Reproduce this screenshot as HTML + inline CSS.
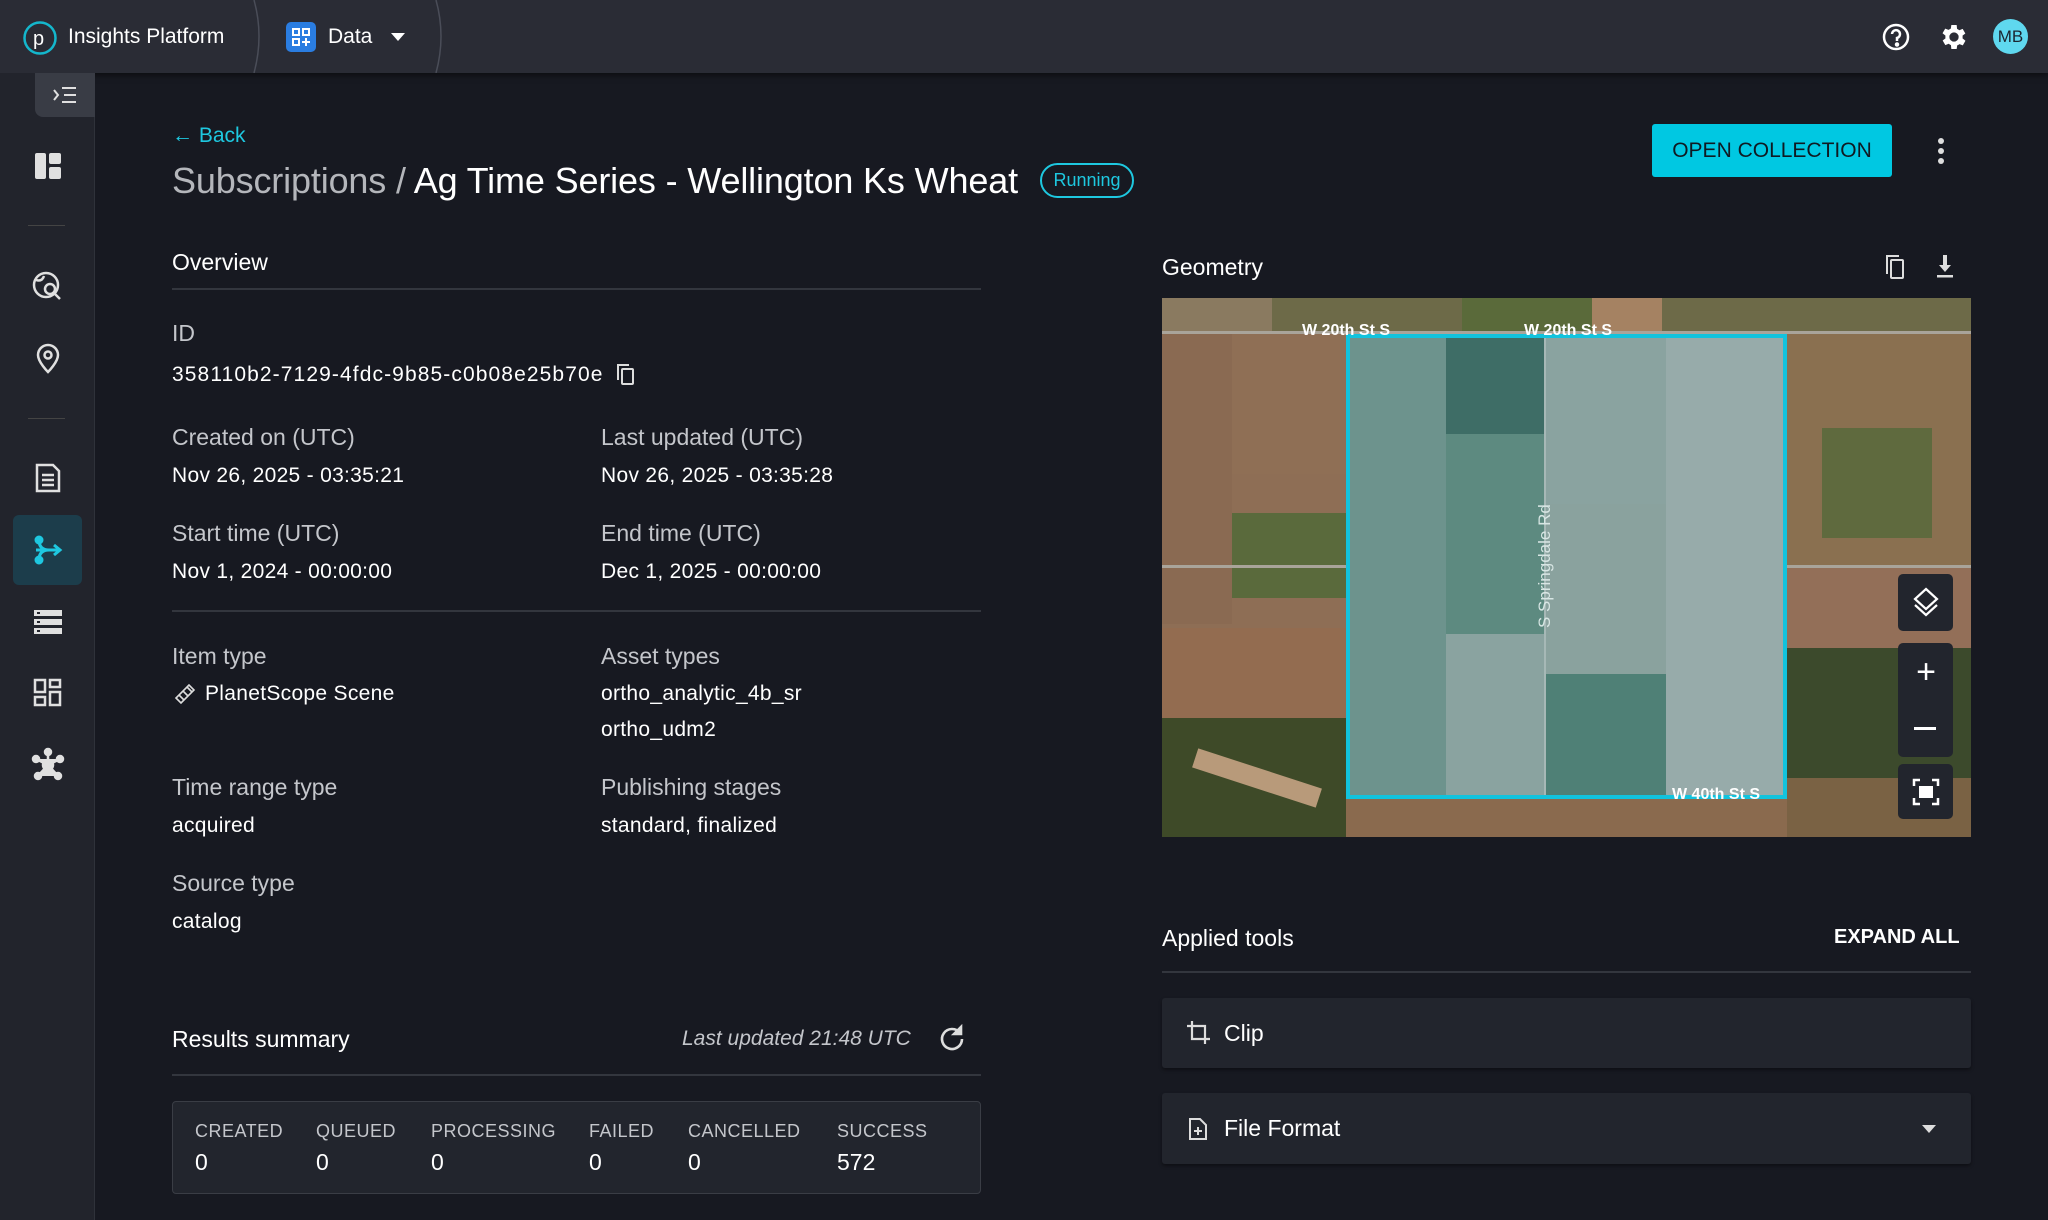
<!DOCTYPE html>
<html><head><meta charset="utf-8"><style>
*{box-sizing:border-box;margin:0;padding:0}
body{width:2048px;height:1220px;background:#171921;font-family:"Liberation Sans",sans-serif;color:#fff;position:relative;overflow:hidden}
.a{position:absolute;white-space:nowrap}
.lbl{font-size:23px;color:#c4c6cb}
.val{font-size:21px;color:#fff;letter-spacing:0.3px}
.line{position:absolute;height:2px;background:#33363e}
.sic{position:absolute;left:30px;width:36px;height:36px}
.m{position:absolute}
</style></head><body>
<!-- header -->
<div class="a" style="left:0;top:0;width:2048px;height:73px;background:#2a2c35;box-shadow:0 2px 6px #0008"></div>
<svg class="a" style="left:22px;top:20px" width="36" height="36"><circle cx="18" cy="18" r="15.5" fill="none" stroke="#14b7cc" stroke-width="2.5"/><text x="11" y="25" font-family="Liberation Sans" font-size="20" fill="#fff">p</text></svg>
<div class="a" style="left:68px;top:25px;font-size:21px">Insights Platform</div>
<svg class="a" style="left:240px;top:0" width="220" height="73"><path d="M14 0 Q24 36 14 73" stroke="#4a4d58" fill="none" stroke-width="1.5"/><path d="M196 0 Q206 36 196 73" stroke="#4a4d58" fill="none" stroke-width="1.5"/></svg>
<div class="a" style="left:286px;top:22px;width:30px;height:30px;background:#2a7de1;border-radius:5px"></div>
<svg class="a" style="left:290px;top:26px" width="22" height="22" fill="none" stroke="#fff" stroke-width="2"><rect x="3" y="3" width="6" height="6"/><rect x="13" y="3" width="6" height="6"/><rect x="3" y="13" width="6" height="6"/><path d="M16 12v8M12 16h8"/></svg>
<div class="a" style="left:328px;top:25px;font-size:21px">Data</div>
<div class="a" style="left:391px;top:33px;width:0;height:0;border-left:7px solid transparent;border-right:7px solid transparent;border-top:8px solid #fff"></div>
<svg class="a" style="left:1880px;top:21px" width="32" height="32" fill="none" stroke="#fff" stroke-width="2.5"><circle cx="16" cy="16" r="12"/><path d="M12 13a4 4 0 1 1 5 4v3"/><circle cx="17" cy="23.5" r="1" fill="#fff"/></svg>
<svg class="a" style="left:1938px;top:21px" width="32" height="32" viewBox="0 0 24 24" fill="#fff"><path d="M19.4 13a7.5 7.5 0 0 0 0-2l2.1-1.6-2-3.5-2.5 1a7 7 0 0 0-1.7-1L15 3h-4l-.4 2.7a7 7 0 0 0-1.7 1l-2.5-1-2 3.5L6.6 11a7.5 7.5 0 0 0 0 2l-2.1 1.6 2 3.5 2.5-1a7 7 0 0 0 1.7 1L11 21h4l.4-2.7a7 7 0 0 0 1.7-1l2.5 1 2-3.5zM13 15.5a3.5 3.5 0 1 1 0-7 3.5 3.5 0 0 1 0 7z" transform="translate(-1 0)"/></svg>
<div class="a" style="left:1993px;top:19px;width:35px;height:35px;border-radius:50%;background:#5fd8ef;color:#1b2530;font-size:17px;text-align:center;line-height:35px">MB</div>
<!-- sidebar -->
<div class="a" style="left:0;top:73px;width:95px;height:1147px;background:#22242c;border-right:1px solid #2f323a"></div>
<div class="a" style="left:35px;top:73px;width:60px;height:44px;background:#393c45;border-radius:0 0 0 8px"></div>
<svg class="a" style="left:52px;top:84px" width="26" height="22" fill="none" stroke="#e0e0e0" stroke-width="2"><path d="M2 6l4 5-4 5M10 4h14M12 11h12M10 18h14"/></svg>
<svg class="sic" style="top:148px" viewBox="0 0 36 36" fill="#e0e0e0"><rect x="5" y="5" width="11" height="26" rx="2"/><rect x="19" y="5" width="12" height="11" rx="2"/><rect x="19" y="19" width="12" height="12" rx="2"/></svg>
<div class="a" style="left:28px;top:225px;width:37px;height:1px;background:#444"></div>
<svg class="sic" style="top:268px" viewBox="0 0 36 36" fill="none" stroke="#e0e0e0" stroke-width="2.5"><circle cx="16" cy="17" r="12"/><circle cx="20" cy="21" r="5"/><path d="M24 25l6 6M6 12q6 2 8-4"/></svg>
<svg class="sic" style="top:340px" viewBox="0 0 36 36" fill="none" stroke="#e0e0e0" stroke-width="2.5"><path d="M18 32s10-10 10-17a10 10 0 0 0-20 0c0 7 10 17 10 17z"/><circle cx="18" cy="15" r="3.5"/></svg>
<div class="a" style="left:28px;top:418px;width:37px;height:1px;background:#444"></div>
<svg class="sic" style="top:460px" viewBox="0 0 36 36" fill="none" stroke="#e0e0e0" stroke-width="2.5"><path d="M7 5h16l6 6v20H7z"/><path d="M12 15h12M12 20h12M12 25h12"/></svg>
<div class="a" style="left:13px;top:515px;width:69px;height:70px;background:#1c3d4b;border-radius:6px"></div>
<svg class="sic" style="top:532px" viewBox="0 0 36 36" fill="none" stroke="#1ec8e0" stroke-width="3"><circle cx="9" cy="8" r="3" fill="#1ec8e0"/><circle cx="9" cy="28" r="3" fill="#1ec8e0"/><path d="M9 8q0 10 10 10q-10 0-10 10M6 18h24M24 13l6 5-6 5"/></svg>
<svg class="sic" style="top:604px" viewBox="0 0 36 36" fill="#e0e0e0"><rect x="4" y="6" width="28" height="6"/><rect x="4" y="15" width="28" height="6"/><rect x="4" y="24" width="28" height="6"/><g fill="#22242c"><rect x="7" y="8" width="3" height="2"/><rect x="7" y="17" width="3" height="2"/><rect x="7" y="26" width="3" height="2"/></g></svg>
<svg class="sic" style="top:675px" viewBox="0 0 36 36" fill="none" stroke="#e0e0e0" stroke-width="2.5"><rect x="5" y="5" width="10" height="12"/><rect x="20" y="5" width="10" height="7"/><rect x="5" y="22" width="10" height="8"/><rect x="20" y="17" width="10" height="13"/></svg>
<svg class="sic" style="top:747px" viewBox="0 0 36 36" fill="#e0e0e0" stroke="#e0e0e0" stroke-width="2.5"><circle cx="18" cy="18" r="5"/><circle cx="18" cy="5" r="3"/><circle cx="6" cy="12" r="3"/><circle cx="30" cy="12" r="3"/><circle cx="8" cy="29" r="3"/><circle cx="28" cy="29" r="3"/><path d="M18 5v13M6 12l12 6 12-6M8 29l10-11 10 11"/></svg>
<!-- header area -->
<div class="a" style="left:172px;top:124px;font-size:21px;color:#1ec8e0">← Back</div>
<div class="a" style="left:172px;top:160px;font-size:36px;letter-spacing:-0.15px"><span style="color:#b4b6bb">Subscriptions</span> <span style="color:#b4b6bb">/</span> Ag Time Series - Wellington Ks Wheat</div>
<div class="a" style="left:1040px;top:163px;width:94px;height:35px;border:2px solid #1ec8e0;border-radius:18px;color:#1ec8e0;font-size:18px;text-align:center;line-height:31px">Running</div>
<div class="a" style="left:1652px;top:124px;width:240px;height:53px;background:#00c8e2;border-radius:3px;color:#0f1a22;font-size:21px;text-align:center;line-height:53px">OPEN COLLECTION</div>
<svg class="a" style="left:1933px;top:136px" width="16" height="30" fill="#ddd"><circle cx="8" cy="5" r="3"/><circle cx="8" cy="15" r="3"/><circle cx="8" cy="25" r="3"/></svg>
<!-- overview -->
<div class="a" style="left:172px;top:249px;font-size:23px">Overview</div>
<div class="line" style="left:172px;top:288px;width:809px"></div>
<div class="a lbl" style="left:172px;top:320px">ID</div>
<div class="a val" style="left:172px;top:363px;letter-spacing:1.1px">358110b2-7129-4fdc-9b85-c0b08e25b70e</div>
<svg class="a" style="left:614px;top:362px" width="24" height="26" fill="none" stroke="#ddd" stroke-width="2"><rect x="8" y="7" width="11" height="15" rx="1"/><path d="M4 18V3h11"/></svg>
<div class="a lbl" style="left:172px;top:424px">Created on (UTC)</div>
<div class="a val" style="left:172px;top:464px">Nov 26, 2025 - 03:35:21</div>
<div class="a lbl" style="left:601px;top:424px">Last updated (UTC)</div>
<div class="a val" style="left:601px;top:464px">Nov 26, 2025 - 03:35:28</div>
<div class="a lbl" style="left:172px;top:520px">Start time (UTC)</div>
<div class="a val" style="left:172px;top:560px">Nov 1, 2024 - 00:00:00</div>
<div class="a lbl" style="left:601px;top:520px">End time (UTC)</div>
<div class="a val" style="left:601px;top:560px">Dec 1, 2025 - 00:00:00</div>
<div class="line" style="left:172px;top:610px;width:809px"></div>
<div class="a lbl" style="left:172px;top:643px">Item type</div>
<svg class="a" style="left:173px;top:681px" width="24" height="24" fill="none" stroke="#ddd" stroke-width="1.6"><path d="M3 17l5 5 13-13-5-5zM6 14l5 5M10 10l5 5M14 6l5 5"/></svg>
<div class="a val" style="left:205px;top:682px">PlanetScope Scene</div>
<div class="a lbl" style="left:601px;top:643px">Asset types</div>
<div class="a val" style="left:601px;top:682px">ortho_analytic_4b_sr</div>
<div class="a val" style="left:601px;top:718px">ortho_udm2</div>
<div class="a lbl" style="left:172px;top:774px">Time range type</div>
<div class="a val" style="left:172px;top:814px">acquired</div>
<div class="a lbl" style="left:601px;top:774px">Publishing stages</div>
<div class="a val" style="left:601px;top:814px">standard, finalized</div>
<div class="a lbl" style="left:172px;top:870px">Source type</div>
<div class="a val" style="left:172px;top:910px">catalog</div>
<!-- results -->
<div class="a" style="left:172px;top:1026px;font-size:23px">Results summary</div>
<div class="a" style="left:682px;top:1027px;font-size:21px;font-style:italic;color:#c4c6cb">Last updated 21:48 UTC</div>
<svg class="a" style="left:938px;top:1024px" width="28" height="28" fill="none" stroke="#ddd" stroke-width="2.6"><path d="M22 9a10 10 0 1 0 2 6"/><path d="M16 10l7-7v7z" fill="#ddd"/></svg>
<div class="line" style="left:172px;top:1074px;width:809px"></div>
<div class="a" style="left:172px;top:1101px;width:809px;height:93px;background:#22252d;border:1px solid #3a3d45;border-radius:4px"></div>
<div class="a" style="left:195px;top:1121px;font-size:18px;color:#c4c6cb;letter-spacing:.5px">CREATED</div>
<div class="a" style="left:316px;top:1121px;font-size:18px;color:#c4c6cb;letter-spacing:.5px">QUEUED</div>
<div class="a" style="left:431px;top:1121px;font-size:18px;color:#c4c6cb;letter-spacing:.5px">PROCESSING</div>
<div class="a" style="left:589px;top:1121px;font-size:18px;color:#c4c6cb;letter-spacing:.5px">FAILED</div>
<div class="a" style="left:688px;top:1121px;font-size:18px;color:#c4c6cb;letter-spacing:.5px">CANCELLED</div>
<div class="a" style="left:837px;top:1121px;font-size:18px;color:#c4c6cb;letter-spacing:.5px">SUCCESS</div>
<div class="a" style="left:195px;top:1149px;font-size:23px">0</div>
<div class="a" style="left:316px;top:1149px;font-size:23px">0</div>
<div class="a" style="left:431px;top:1149px;font-size:23px">0</div>
<div class="a" style="left:589px;top:1149px;font-size:23px">0</div>
<div class="a" style="left:688px;top:1149px;font-size:23px">0</div>
<div class="a" style="left:837px;top:1149px;font-size:23px">572</div>
<!-- geometry -->
<div class="a" style="left:1162px;top:254px;font-size:23px">Geometry</div>
<svg class="a" style="left:1882px;top:252px" width="26" height="30" fill="none" stroke="#ddd" stroke-width="2"><rect x="9" y="8" width="12" height="18" rx="1"/><path d="M5 22V4h12"/></svg>
<svg class="a" style="left:1933px;top:252px" width="24" height="28" fill="#ddd"><path d="M10 3h4v10h4l-6 7-6-7h4z"/><rect x="4" y="23" width="16" height="2.5"/></svg>
<div class="a" style="left:1162px;top:298px;width:809px;height:539px;overflow:hidden;background:#8e6e55">
 <div class="m" style="left:0;top:0;width:809px;height:36px;background:#6d6a48"></div>
 <div class="m" style="left:0;top:0;width:110px;height:36px;background:#8a7a60"></div>
 <div class="m" style="left:300px;top:0;width:130px;height:36px;background:#5a6a3a"></div>
 <div class="m" style="left:430px;top:0;width:70px;height:36px;background:#a58262"></div>
 <div class="m" style="left:0;top:36px;width:70px;height:290px;background:#8a6a52"></div>
 <div class="m" style="left:70px;top:36px;width:115px;height:140px;background:#8f6f55"></div>
 <div class="m" style="left:70px;top:215px;width:115px;height:85px;background:#5a6a3c"></div>
 <div class="m" style="left:0;top:330px;width:185px;height:90px;background:#936c50"></div>
 <div class="m" style="left:0;top:420px;width:185px;height:119px;background:#3e4a28"></div>
 <div class="m" style="left:30px;top:470px;width:130px;height:20px;background:#b89a7a;transform:rotate(18deg)"></div>
 <div class="m" style="left:625px;top:36px;width:184px;height:260px;background:#8a7050"></div>
 <div class="m" style="left:660px;top:130px;width:110px;height:110px;background:#5f6a3e"></div>
 <div class="m" style="left:625px;top:270px;width:184px;height:80px;background:#936f58"></div>
 <div class="m" style="left:625px;top:350px;width:184px;height:130px;background:#3c4a2c"></div>
 <div class="m" style="left:625px;top:480px;width:184px;height:59px;background:#7a6244"></div>
 <div class="m" style="left:184px;top:501px;width:441px;height:38px;background:#8a6a4e"></div>
 <div class="m" style="left:0;top:267px;width:809px;height:3px;background:#a9a49a"></div>
 <div class="m" style="left:0;top:33px;width:809px;height:3px;background:#a9a49a"></div>
 <div class="m" style="left:184px;top:36px;width:441px;height:465px;background:#8aa3a0"></div>
 <div class="m" style="left:184px;top:36px;width:100px;height:465px;background:#6d938d"></div>
 <div class="m" style="left:284px;top:36px;width:100px;height:100px;background:#3e6d66"></div>
 <div class="m" style="left:284px;top:136px;width:100px;height:200px;background:#5d8a80"></div>
 <div class="m" style="left:384px;top:206px;width:120px;height:170px;background:#8aa29e"></div>
 <div class="m" style="left:384px;top:376px;width:120px;height:125px;background:#4f8076"></div>
 <div class="m" style="left:504px;top:36px;width:121px;height:465px;background:#97abaa"></div>
 <div class="m" style="left:382px;top:36px;width:2px;height:465px;background:#a6b8b6"></div>
 <div class="m" style="left:184px;top:36px;width:441px;height:465px;border:4px solid #12c3dd"></div>
 <div class="m" style="left:140px;top:24px;font-size:16px;color:#fff;font-weight:bold">W 20th St S</div>
 <div class="m" style="left:362px;top:24px;font-size:16px;color:#fff;font-weight:bold">W 20th St S</div>
 <div class="m" style="left:510px;top:488px;font-size:16px;color:#fff;font-weight:bold">W 40th St S</div>
 <div class="m" style="left:373px;top:330px;font-size:17px;color:#d8e6e4;transform:rotate(-90deg);transform-origin:0 0">S Springdale Rd</div>
</div>
<div class="a" style="left:1898px;top:574px;width:55px;height:57px;background:#22252d;border-radius:5px"></div>
<svg class="a" style="left:1910px;top:586px" width="32" height="34" fill="none" stroke="#fff" stroke-width="2.2"><path d="M16 3l11 10-11 10L5 13z"/><path d="M5 19l11 10 11-10"/></svg>
<div class="a" style="left:1898px;top:643px;width:55px;height:114px;background:#22252d;border-radius:5px"></div>
<div class="a" style="left:1911px;top:653px;font-size:34px;width:30px;text-align:center">+</div>
<div class="a" style="left:1914px;top:727px;width:22px;height:3px;background:#fff"></div>
<div class="a" style="left:1898px;top:764px;width:55px;height:55px;background:#22252d;border-radius:5px"></div>
<svg class="a" style="left:1911px;top:777px" width="30" height="30" fill="none" stroke="#fff" stroke-width="2.5"><path d="M3 9V3h6M21 3h6v6M27 21v6h-6M9 27H3v-6"/><rect x="8" y="9" width="14" height="12" fill="#fff" stroke="none"/></svg>
<!-- applied tools -->
<div class="a" style="left:1162px;top:925px;font-size:23px">Applied tools</div>
<div class="a" style="left:1834px;top:926px;font-size:20px;font-weight:bold">EXPAND ALL</div>
<div class="line" style="left:1162px;top:971px;width:809px"></div>
<div class="a" style="left:1162px;top:998px;width:809px;height:70px;background:#22252d;border-radius:3px;box-shadow:0 2px 3px #0006"></div>
<svg class="a" style="left:1186px;top:1020px" width="26" height="26" fill="none" stroke="#ddd" stroke-width="2.2"><path d="M6 1v18h18M1 6h18v18"/></svg>
<div class="a" style="left:1224px;top:1020px;font-size:23px">Clip</div>
<div class="a" style="left:1162px;top:1093px;width:809px;height:71px;background:#22252d;border-radius:3px;box-shadow:0 2px 3px #0006"></div>
<svg class="a" style="left:1186px;top:1116px" width="24" height="26" fill="none" stroke="#ddd" stroke-width="2"><path d="M14 3H4v20h16V9z"/><path d="M12 11v8M8 15h8"/></svg>
<div class="a" style="left:1224px;top:1115px;font-size:23px">File Format</div>
<div class="a" style="left:1922px;top:1125px;width:0;height:0;border-left:7px solid transparent;border-right:7px solid transparent;border-top:8px solid #ddd"></div>
</body></html>
